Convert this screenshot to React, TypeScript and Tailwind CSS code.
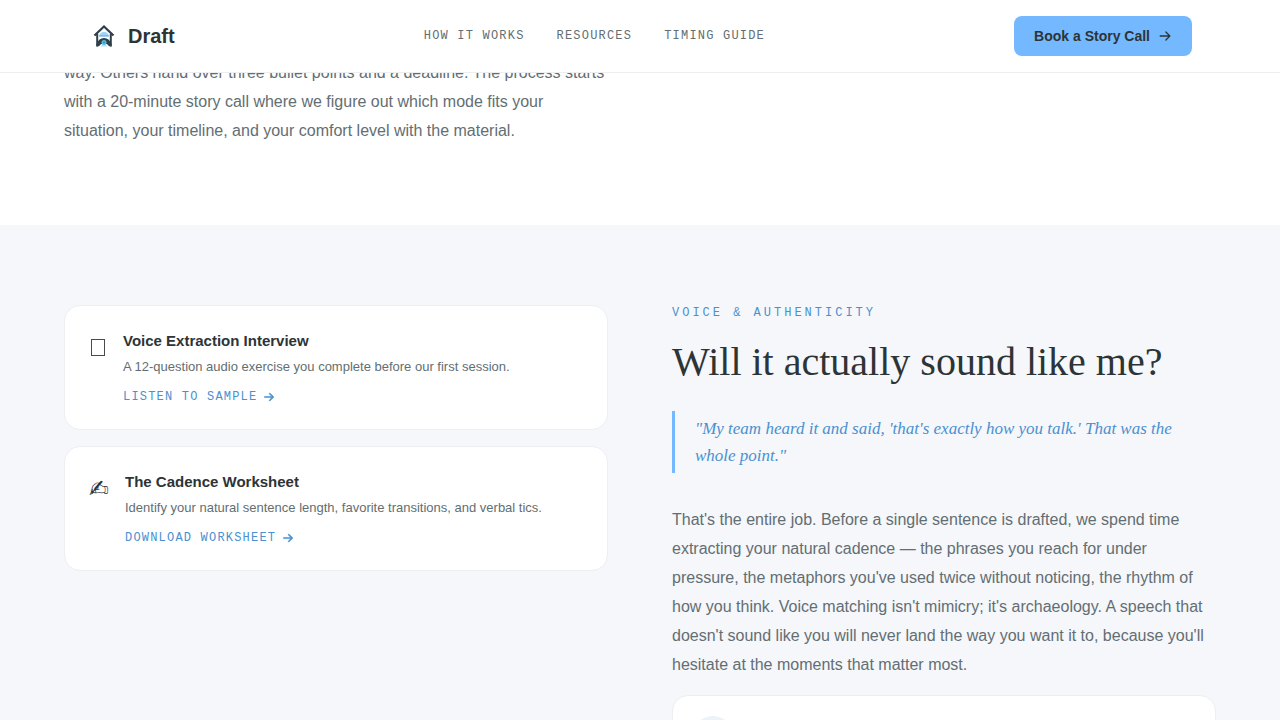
import type { ReactNode } from 'react';
import { PiArrowRightBold } from 'react-icons/pi';

interface Resource {
  title: string;
  description: string;
  action: string;
  icon: ReactNode;
}

const navLinks = [
  { label: 'HOW IT WORKS', href: '#how-it-works' },
  { label: 'RESOURCES', href: '#resources' },
  { label: 'TIMING GUIDE', href: '#timing-guide' },
];

const resources: Resource[] = [
  {
    title: 'Voice Extraction Interview',
    description: 'A 12-question audio exercise you complete before our first session.',
    action: 'LISTEN TO SAMPLE',
    icon: (
      <svg width="18" height="36" viewBox="0 0 18 36" fill="none" aria-hidden="true">
        <rect x="2.5" y="9.5" width="13" height="16" stroke="#4a4a4c" />
      </svg>
    ),
  },
  {
    title: 'The Cadence Worksheet',
    description: 'Identify your natural sentence length, favorite transitions, and verbal tics.',
    action: 'DOWNLOAD WORKSHEET',
    icon: (
      <span className="block w-5 font-['DejaVu_Sans',sans-serif] text-2xl leading-9 text-[#2d3436]">
        ✍
      </span>
    ),
  },
];

function Logo() {
  return (
    <svg width="32" height="32" viewBox="0 0 32 32" fill="none" aria-hidden="true">
      <path d="M11 17c0-3 2-5 5-5s5 2 5 5z" fill="#a4d3f7" />
      <path d="M11.5 15.500h9" stroke="#74b9ff" />
      <path d="M6.500 15.500L16 6.500l9.500 9" stroke="#2d3f48" strokeWidth="2.200" />
      <path d="M9.200 14v12M22.800 14v12" stroke="#2d3f48" strokeWidth="2" />
      <path d="M8.500 27v-3c1.500-4 4-6 7.500-6s6 2 7.500 6v3c-2-.5-3.500-1.500-4.500-3h-6c-1 1.500-2.500 2.500-4.500 3z" fill="#2d3f48" />
      <path d="M12.500 26.500c1-1.500 2-2.500 3.500-2.500s2.500 1 3.500 2.500z" fill="#b9def8" />
      <circle cx="16" cy="22.500" r="2.500" fill="#58bfe2" />
      <circle cx="16" cy="22.500" r="1" fill="#2a93b8" />
    </svg>
  );
}

function Header() {
  return (
    <header className="fixed inset-x-0 top-0 z-10 border-b border-[#eceef0] bg-white px-16">
      <div className="flex items-center justify-between px-6 py-4">
        <a href="#" className="flex items-center gap-2 text-xl font-bold text-[#2d3436]">
          <Logo />
          Draft
        </a>
        <nav className="flex gap-8 font-['Liberation_Mono',monospace] text-xs tracking-widest text-[#636e72]">
          {navLinks.map((link) => (
            <a key={link.href} href={link.href}>
              {link.label}
            </a>
          ))}
        </nav>
        <button className="flex h-10 items-center gap-2 rounded-lg bg-[#74b9ff] px-5 text-sm font-bold text-[#2d3436]">
          Book a Story Call
          <PiArrowRightBold size={14} />
        </button>
      </div>
    </header>
  );
}

function ResourceCard({ resource }: { resource: Resource }) {
  return (
    <article className="flex items-start gap-4 rounded-2xl border border-[#eceef1] bg-white p-6">
      {resource.icon}
      <div>
        <h3 className="text-[15px] leading-[22px] font-bold text-[#2d3436]">{resource.title}</h3>
        <p className="mt-1 text-[13px] leading-[21px] text-[#636e72]">{resource.description}</p>
        <a
          href="#resources"
          className="mt-3 flex w-fit items-center gap-1.5 font-['Liberation_Mono',monospace] text-xs tracking-widest text-[#4a90d0]"
        >
          {resource.action}
          <PiArrowRightBold size={12} strokeWidth={12} />
        </a>
      </div>
    </article>
  );
}

export default function App() {
  return (
    <div className="h-screen overflow-hidden bg-white font-['Liberation_Sans',sans-serif]">
      <Header />
      <main>
        <section className="grid grid-cols-2 gap-16 px-16 pt-[58px] pb-20">
          <p className="leading-[29px] text-[#636e72]">
            way. Others hand over three bullet points and a deadline. The process starts with a
            20-minute story call where we figure out which mode fits your situation, your timeline,
            and your comfort level with the material.
          </p>
        </section>

        <section className="grid grid-cols-2 gap-16 bg-[#f5f7fb] px-16 py-20">
          <div className="flex flex-col gap-4">
            {resources.map((resource) => (
              <ResourceCard key={resource.title} resource={resource} />
            ))}
          </div>

          <div>
            <p className="font-['Liberation_Mono',monospace] text-xs tracking-[3px] text-[#4a90d0]">
              VOICE &amp; AUTHENTICITY
            </p>
            <h2 className="mt-4 font-['Liberation_Serif',serif] text-[40px] leading-[50px] text-[#2d3436]">
              Will it actually sound like me?
            </h2>
            <blockquote className="mt-6 border-l-3 border-[#74b9ff] py-1 pl-5 font-['Liberation_Serif',serif] text-[17px] leading-[27px] text-[#4a90d0] italic">
              "My team heard it and said, 'that's exactly how you talk.' That was the whole point."
            </blockquote>
            <p className="mt-8 leading-[29px] text-[#636e72]">
              That's the entire job. Before a single sentence is drafted, we spend time extracting
              your natural cadence — the phrases you reach for under pressure, the metaphors you've
              used twice without noticing, the rhythm of how you think. Voice matching isn't
              mimicry; it's archaeology. A speech that doesn't sound like you will never land the
              way you want it to, because you'll hesitate at the moments that matter most.
            </p>
            <div className="mt-4 rounded-2xl border border-[#eceef1] bg-white p-5">
              <div className="size-10 rounded-full bg-[#eaf3fc]"></div>
            </div>
          </div>
        </section>
      </main>
    </div>
  );
}
